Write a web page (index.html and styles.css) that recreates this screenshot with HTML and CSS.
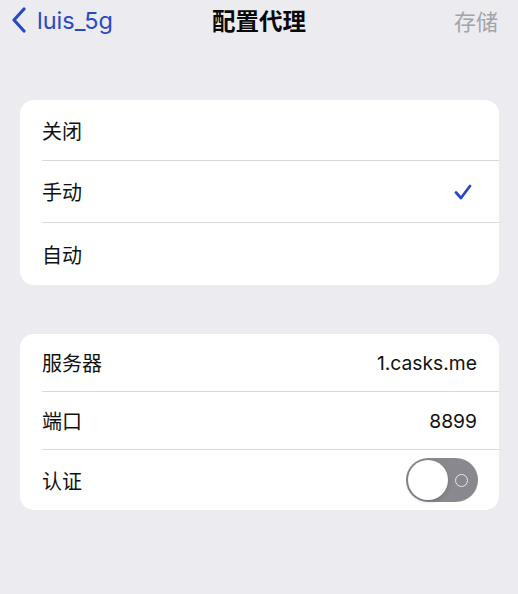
FILE: index.html
```html
<!DOCTYPE html>
<html lang="zh-CN">
  <head>
    <meta charset="UTF-8" />
    <meta name="viewport" content="width=device-width, initial-scale=1.0" />
    <title>配置代理</title>
    <link rel="stylesheet" href="styles.css">
  </head>
  <body>
    <header class="navbar">
      <a class="back" href="#">
        <svg class="chevron" viewBox="0 0 16 26" width="16" height="26">
          <path d="M13 2 L3 13 L13 24" fill="none" stroke="currentColor" stroke-width="3.2" stroke-linecap="round" stroke-linejoin="round" />
        </svg>
        <span>luis_5g</span>
      </a>
      <h1 class="title">配置代理</h1>
      <span class="save">存储</span>
    </header>

    <main class="content">
      <ul class="group mode">
        <li class="row"><div class="row-inner">关闭</div></li>
        <li class="row">
          <div class="row-inner">
            <span>手动</span>
            <svg class="check" viewBox="0 0 18 16" width="18" height="16">
              <path d="M2 8.5 L7 14 L16 2" fill="none" stroke="currentColor" stroke-width="2.8" stroke-linecap="round" stroke-linejoin="round" />
            </svg>
          </div>
        </li>
        <li class="row"><div class="row-inner">自动</div></li>
      </ul>

      <ul class="group details">
        <li class="row">
          <div class="row-inner">
            <span>服务器</span>
            <span class="value">1.casks.me</span>
          </div>
        </li>
        <li class="row">
          <div class="row-inner">
            <span>端口</span>
            <span class="value">8899</span>
          </div>
        </li>
        <li class="row row-toggle">
          <div class="row-inner">
            <span>认证</span>
            <span class="toggle">
              <span class="knob"></span>
              <span class="off-mark"></span>
            </span>
          </div>
        </li>
      </ul>
    </main>
  </body>
</html>
```

FILE: styles.css
```css
* {
  box-sizing: border-box;
}

body {
  margin: 0;
  font-family: "Inter", "Noto Sans CJK SC", sans-serif;
  background: #ebebf0;
  color: #111;
  width: 518px;
  height: 594px;
}

.navbar {
  display: grid;
  grid-template-columns: 1fr auto 1fr;
  align-items: center;
  height: 40px;
  padding: 0 20px;
}

.back {
  display: flex;
  align-items: center;
  gap: 10px;
  margin-left: -9px;
  color: #2a4ac4;
  text-decoration: none;
  font-size: 23.5px;
}

.chevron {
  display: block;
}

.title {
  margin: 0;
  font-size: 23.5px;
  font-weight: 700;
  color: #0a0a0a;
}

.save {
  justify-self: end;
  font-size: 22px;
  color: #a3a3a8;
}

.content {
  padding: 60px 19px 0 20px;
  display: flex;
  flex-direction: column;
  gap: 49px;
}

.group {
  list-style: none;
  margin: 0;
  padding: 0;
  background: #fff;
  border-radius: 14px;
  overflow: hidden;
}

.row {
  padding-left: 22px;
  font-size: 20px;
}

.row-inner {
  display: flex;
  align-items: center;
  justify-content: space-between;
  padding-right: 22px;
  border-bottom: 1px solid #d9d9de;
}

.row:last-child .row-inner {
  border-bottom: none;
}

.mode .row-inner {
  height: 62px;
}

.mode .row:first-child .row-inner {
  height: 61px;
}

.details .row-inner {
  height: 58px;
}

.details .row-toggle .row-inner {
  height: 60px;
}

.check {
  color: #2a4ac4;
  margin-right: 5px;
}

.value {
  font-size: 19.3px;
  color: #111;
}

.toggle {
  position: relative;
  display: flex;
  align-items: center;
  width: 72px;
  height: 44px;
  border-radius: 22px;
  background: #88888e;
  padding: 2px;
  margin-right: -1px;
}

.knob {
  width: 40px;
  height: 40px;
  border-radius: 50%;
  background: #fff;
  box-shadow: 0 2px 4px rgba(0, 0, 0, 0.15);
}

.off-mark {
  width: 13px;
  height: 13px;
  margin-left: 7px;
  border-radius: 50%;
  border: 1.6px solid #e6e6ea;
}
```
